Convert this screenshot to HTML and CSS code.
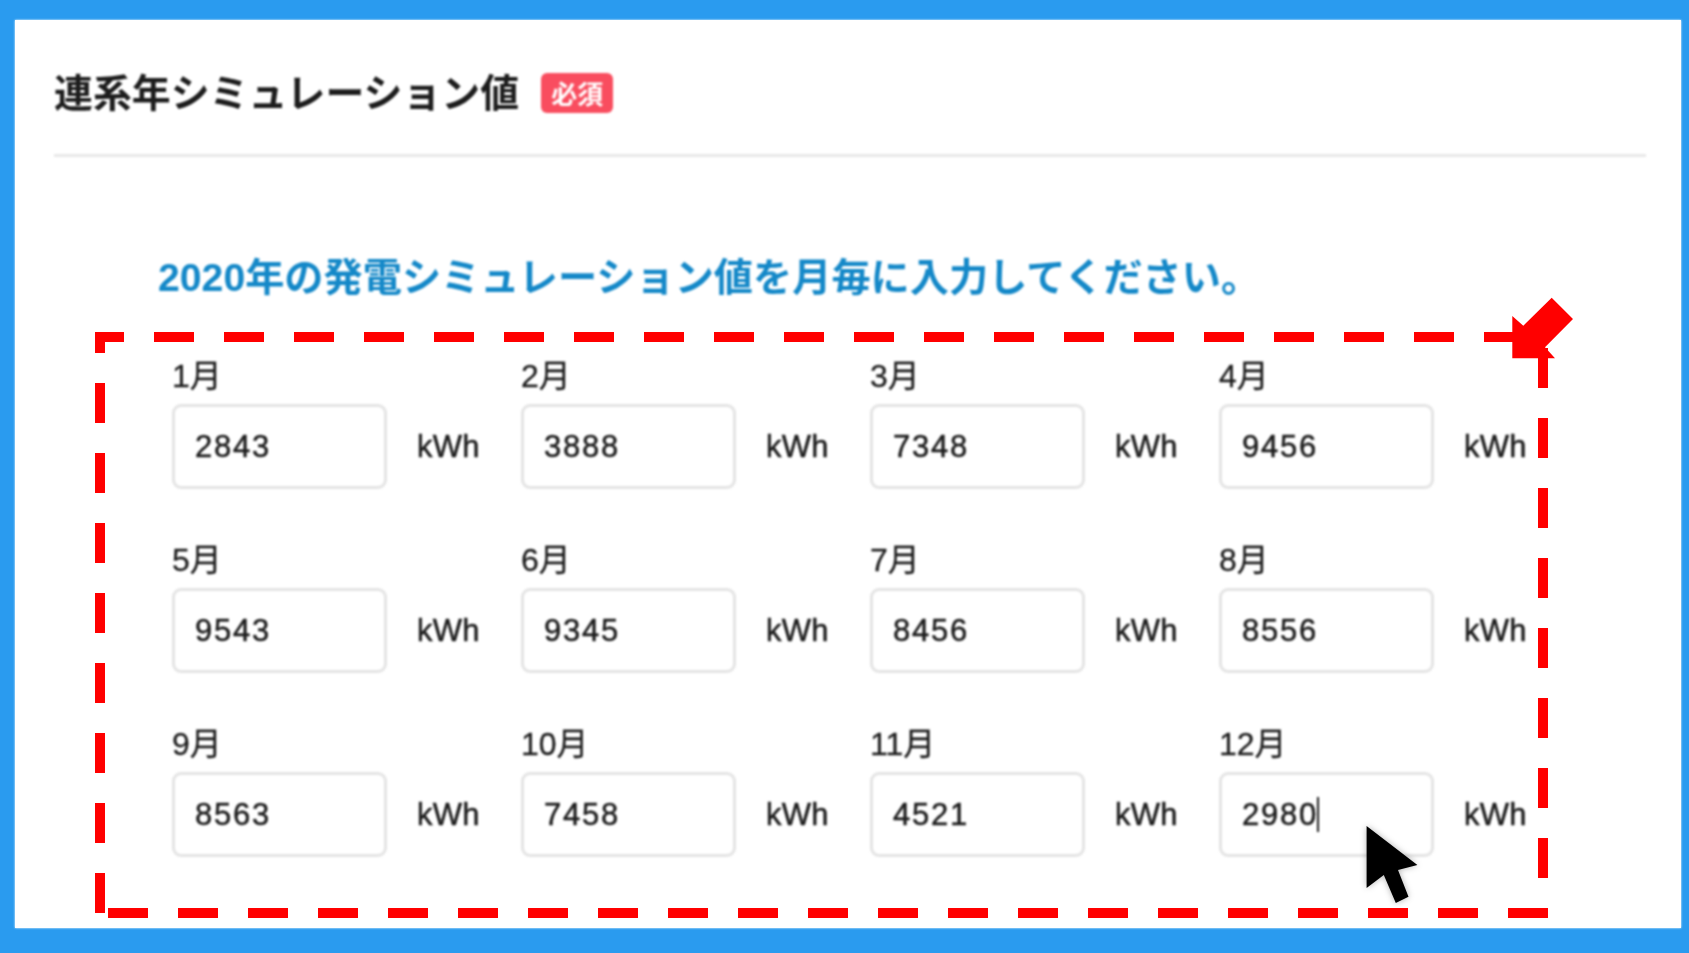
FILE: index.html
```html
<!DOCTYPE html>
<html lang="ja">
<head>
<meta charset="utf-8">
<title>連系年シミュレーション値</title>
<link rel="stylesheet" href="styles.css">
</head>
<body>
<main class="panel">
  <div class="soft">
    <header class="head">
      <h1 class="title">連系年シミュレーション値</h1>
      <span class="badge">必須</span>
    </header>
    <p class="lead">2020年の発電シミュレーション値を月毎に入力してください。</p>
    <div class="grid">
      <div class="cell"><label class="month">1月</label><div class="row"><input class="field" value="2843"><span class="unit">kWh</span></div></div>
      <div class="cell"><label class="month">2月</label><div class="row"><input class="field" value="3888"><span class="unit">kWh</span></div></div>
      <div class="cell"><label class="month">3月</label><div class="row"><input class="field" value="7348"><span class="unit">kWh</span></div></div>
      <div class="cell"><label class="month">4月</label><div class="row"><input class="field" value="9456"><span class="unit">kWh</span></div></div>
      <div class="cell"><label class="month">5月</label><div class="row"><input class="field" value="9543"><span class="unit">kWh</span></div></div>
      <div class="cell"><label class="month">6月</label><div class="row"><input class="field" value="9345"><span class="unit">kWh</span></div></div>
      <div class="cell"><label class="month">7月</label><div class="row"><input class="field" value="8456"><span class="unit">kWh</span></div></div>
      <div class="cell"><label class="month">8月</label><div class="row"><input class="field" value="8556"><span class="unit">kWh</span></div></div>
      <div class="cell"><label class="month">9月</label><div class="row"><input class="field" value="8563"><span class="unit">kWh</span></div></div>
      <div class="cell"><label class="month">10月</label><div class="row"><input class="field" value="7458"><span class="unit">kWh</span></div></div>
      <div class="cell"><label class="month">11月</label><div class="row"><input class="field" value="4521"><span class="unit">kWh</span></div></div>
      <div class="cell"><label class="month">12月</label><div class="row"><input class="field" value="2980"><i class="caret"></i><span class="unit">kWh</span></div></div>
    </div>
  </div>
</main>
<svg class="overlay" viewBox="0 0 1689 953" aria-hidden="true">
  <g class="dash">
    <path d="M95 337H124"/>
    <path d="M154 337H1520" stroke-dasharray="40 30 40 30 40 30 40 30 40 30 40 30 40 30 40 30 40 30 40 30 40 30 40 30 40 30 40 30 40 30 40 30 40 30 40 30 40 30 60"/>
    <path d="M100 332V353"/>
    <path d="M100 383V913" stroke-dasharray="40 30"/>
    <path d="M108 913H1548" stroke-dasharray="40 30"/>
    <path d="M1543 348V388"/>
    <path d="M1543 418V878" stroke-dasharray="40 30"/>
  </g>
  <polygon class="arrow" points="1512.3,316 1523.3,325.7 1551.7,297.7 1573,319 1545,347.3 1555,358.3 1512.3,358.3"/>
  <polygon class="cursor" points="1366.6,826 1417.4,865 1398,870 1408.5,896.7 1395.8,903 1383.8,875 1366.6,888"/>
</svg>
</body>
</html>
```
FILE: styles.css
```css
* { box-sizing: border-box; }
html, body { margin: 0; height: 100%; }
body {
  width: 1689px;
  height: 953px;
  padding: 20px 8px 25px 15px;
  background: #2a9bef;
  overflow: hidden;
  font-family: "Liberation Sans", "Noto Sans CJK JP", sans-serif;
  color: #333;
}
.panel {
  height: 908px;
  background: #fff;
  padding-top: 48px;
  box-shadow: 0 0 2px #fff;
}
.soft { filter: blur(0.9px); }
.head {
  display: flex;
  align-items: center;
  gap: 22px;
  margin: 0 35px 0 39px;
  height: 89px;
  padding-bottom: 42px;
  border-bottom: 3px solid #e8e8e8;
}
.title {
  margin: 0;
  font: 700 38.9px/44px "Noto Sans CJK JP", sans-serif;
  color: #1c1c1c;
}
.badge {
  width: 72px;
  height: 40px;
  margin-top: 6px;
  border-radius: 6px;
  background: #f94d5f;
  color: #fff;
  font: 700 26px/40px "Noto Sans CJK JP", sans-serif;
  text-align: center;
}
.lead {
  margin: 96px 0 0 143px;
  font: 700 39.2px/50px "Liberation Sans", "Noto Sans CJK JP", sans-serif;
  color: #1488c8;
}
.grid {
  display: grid;
  grid-template-columns: repeat(4, 349px);
  row-gap: 54px;
  margin: 56px 0 0 157px;
}
.cell { display: flex; flex-direction: column; }
.month {
  height: 45px;
  font: 400 32px/34px "Liberation Sans", "Noto Sans CJK JP", sans-serif;
  color: #1c1c1c;
  -webkit-text-stroke: 0.3px #1c1c1c;
}
.row {
  position: relative;
  display: flex;
  align-items: center;
  gap: 30px;
}
.field {
  width: 215px;
  height: 85px;
  padding: 0 20px;
  border: 3px solid #e4e4e4;
  border-radius: 9px;
  background: #fff;
  font: 400 31px "Liberation Sans", sans-serif;
  letter-spacing: 1.8px;
  color: #1c1c1c;
  -webkit-text-stroke: 0.5px #1c1c1c;
  outline: none;
}
.caret {
  position: absolute;
  left: 98px;
  top: 25px;
  width: 2px;
  height: 35px;
  background: #1c1c1c;
}
.unit {
  font: 400 31px "Liberation Sans", sans-serif;
  letter-spacing: 0.3px;
  color: #1c1c1c;
  -webkit-text-stroke: 0.5px #1c1c1c;
}
.overlay {
  position: absolute;
  left: 0;
  top: 0;
  width: 1689px;
  height: 953px;
}
.dash path { fill: none; stroke: #ff0000; stroke-width: 10; }
.arrow { fill: #ff0000; }
.cursor { fill: #000; filter: drop-shadow(0 0 3px rgba(0,0,0,.3)); }
```
